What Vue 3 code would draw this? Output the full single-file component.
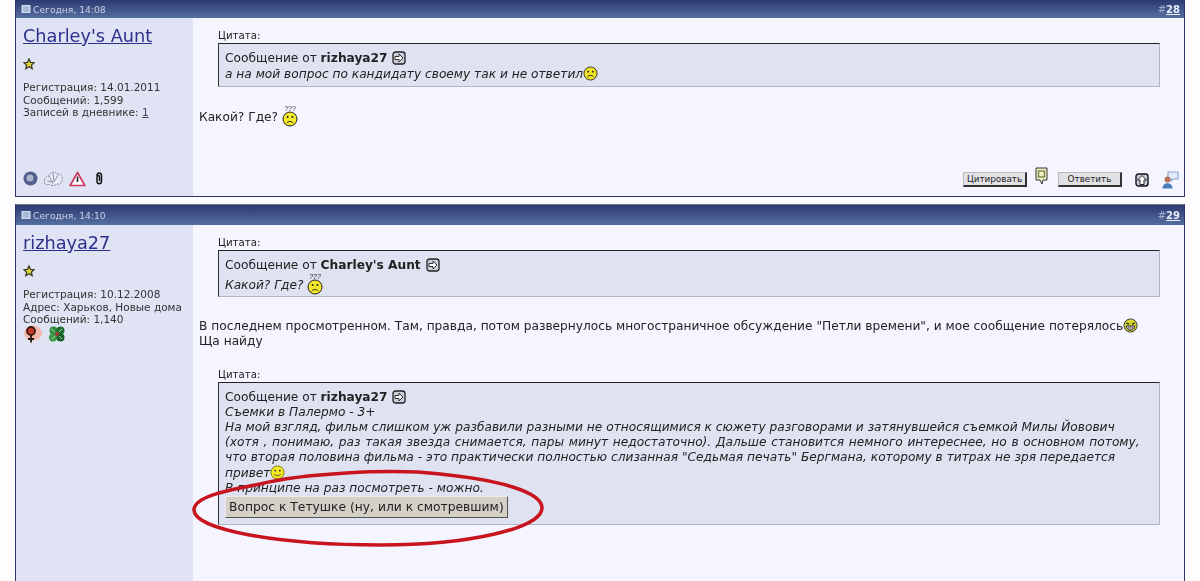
<template>
  <div class="page">
    <svg class="defs" width="0" height="0">
      <defs>
        <symbol id="puzzled" viewBox="0 0 16 22">
          <text x="8" y="6" font-size="7" text-anchor="middle" fill="#333" font-family="Liberation Sans, sans-serif">???</text>
          <circle cx="8" cy="14" r="7" fill="#f4e92c" stroke="#222" stroke-width="1" />
          <circle cx="5.600" cy="12" r="1" fill="#222" />
          <circle cx="10.400" cy="12" r="1" fill="#222" />
          <path d="M4.800 18c1.600-2 4.800-2 6.400 0" fill="none" stroke="#222" stroke-width="1" />
        </symbol>
        <symbol id="sad" viewBox="0 0 16 16">
          <circle cx="8" cy="8" r="7" fill="#f0e224" stroke="#333" stroke-width="1" />
          <circle cx="5.500" cy="6" r="1" fill="#222" />
          <circle cx="10.500" cy="6" r="1" fill="#222" />
          <path d="M4.800 11.500c1.600-2 4.800-2 6.400 0" fill="none" stroke="#222" stroke-width="1" />
        </symbol>
        <symbol id="smile" viewBox="0 0 16 16">
          <circle cx="8" cy="8" r="7" fill="#f6ea20" stroke="#7a7a20" stroke-width="1" />
          <circle cx="5.500" cy="6" r="1" fill="#333" />
          <circle cx="10.500" cy="6" r="1" fill="#333" />
          <path d="M4.500 9.500c1.600 2.600 5.400 2.600 7 0" fill="none" stroke="#333" stroke-width="1" />
        </symbol>
        <symbol id="laugh" viewBox="0 0 16 16">
          <circle cx="8" cy="8" r="7" fill="#d8d62c" stroke="#333" stroke-width="1" />
          <path d="M3.500 5.500l3 1M12.500 5.500l-3 1" stroke="#222" stroke-width="1.200" />
          <path d="M3.500 8.500h9c0 6-9 6-9 0z" fill="#fff" stroke="#222" stroke-width="1" />
          <path d="M3.800 10.500h8.400M6 8.500v4.500M8 8.500v5M10 8.500v4.500" stroke="#555" stroke-width="0.700" />
        </symbol>
        <symbol id="star" viewBox="0 0 12 12">
          <path d="M6 1l1.500 3.300 3.500.4-2.600 2.400.8 3.500L6 8.800l-3.200 1.800.8-3.500L1 4.700l3.500-.4z" fill="#e0d53a" stroke="#3e3e28" stroke-width="1.300" />
        </symbol>
        <symbol id="jump" viewBox="0 0 14 14">
          <rect x="1" y="1" width="12" height="12" rx="2.500" fill="#c9cddc" stroke="#222" stroke-width="1.300" />
          <path d="M3 5.500h4V3l4 4-4 4V8.500H3z" fill="#fff" stroke="#333" stroke-width="1" />
        </symbol>
        <symbol id="doc" viewBox="0 0 10 10">
          <rect x="0.500" y="1" width="9" height="8" fill="#cfdcf2" />
          <path d="M2 3h6M2 5h6M2 7h6" stroke="#7f95bd" stroke-width="1" />
        </symbol>
      </defs>
    </svg>

    <article v-for="post in posts" :key="post.id" class="post" :class="'post-' + post.id">
      <header class="post-head">
        <span class="post-date">
          <svg class="doc-icon" width="10" height="10"><use href="#doc" /></svg>
          {{ post.date }}
        </span>
        <span class="post-num">#<a>{{ post.id }}</a></span>
      </header>

      <div class="post-main">
        <aside class="side">
          <a class="username">{{ post.author }}</a>
          <svg class="rank" width="12" height="12"><use href="#star" /></svg>
          <div class="stats">
            <div v-for="line in post.stats" :key="line">{{ line }}</div>
            <div v-if="post.id === 28">Записей в дневнике: <a class="diary">1</a></div>
          </div>

          <div v-if="post.id === 29" class="awards">
            <svg width="19" height="18" viewBox="0 0 19 18">
              <ellipse cx="10" cy="8" rx="9" ry="7.500" fill="#f4b9ac" />
              <circle cx="8" cy="6" r="4" fill="#c43a2a" stroke="#3a1a10" stroke-width="1.800" />
              <path d="M8 10v7.500M5 14h6" stroke="#2a1410" stroke-width="1.800" />
            </svg>
            <svg width="18" height="18" viewBox="0 0 18 18">
              <circle cx="5.500" cy="5.500" r="4" fill="#2f8a3c" />
              <circle cx="12.500" cy="5.500" r="4" fill="#1f6e30" />
              <circle cx="5" cy="12.500" r="4" fill="#3c9a48" />
              <circle cx="12.500" cy="12.500" r="4" fill="#17602a" />
              <path d="M3 4l4 3M14 4l-3 3M4 14l3-3M14 14l-3-3" stroke="#a8d8a0" stroke-width="1" />
              <circle cx="9" cy="9" r="2" fill="#a83838" />
            </svg>
          </div>

          <div v-if="post.id === 28" class="status-icons">
            <svg width="15" height="15" viewBox="0 0 15 15">
              <circle cx="7.500" cy="7.500" r="7" fill="#525f8c" />
              <circle cx="7" cy="7" r="3.500" fill="#aeb4ca" />
            </svg>
            <svg width="21" height="17" viewBox="0 0 21 17">
              <path d="M2 14c-2-4 1-8 4-8 1-4 6-5 8-2 3-1 6 2 5 5 1 3-2 6-5 5-2 2-6 2-8 0-1 1-3 1-4 0z" fill="#e8ebf6" stroke="#7f86a0" stroke-width="1" stroke-dasharray="2 1" />
              <path d="M6 6l4 8M10 3l1 9M15 5l-4 7M4 11l6 1" stroke="#8f96ac" stroke-width="1" />
            </svg>
            <svg width="17" height="16" viewBox="0 0 17 16">
              <path d="M8.500 1.500L15.800 14.500H1.200z" fill="#fff" stroke="#cf3560" stroke-width="1.700" stroke-linejoin="round" />
              <path d="M8.500 5.500v5.500" stroke="#222" stroke-width="1.600" />
            </svg>
            <svg class="clip" width="8" height="13" viewBox="0 0 8 13">
              <path d="M2 4c0-4 4.500-4 4.500 0v5c0 3.500-4.500 3.500-4.500 0V5c0-2 2.500-2 2.500 0v4" fill="none" stroke="#111" stroke-width="1.500" />
            </svg>
          </div>
        </aside>

        <section class="body">
          <template v-if="post.id === 28">
            <div class="quote">
              <div class="quote-label">Цитата:</div>
              <div class="quote-box">
                <div>Сообщение от <b>rizhaya27</b> <svg class="jump" width="14" height="14"><use href="#jump" /></svg></div>
                <div class="it">а на мой вопрос по кандидату своему так и не ответил<svg class="emo" width="15" height="15"><use href="#sad" /></svg></div>
              </div>
            </div>
            <p class="msg first">Какой? Где? <svg class="emo tall" width="16" height="22"><use href="#puzzled" /></svg></p>
            <div class="actions">
              <button class="btn">Цитировать</button>
              <svg class="multi" width="13" height="19" viewBox="0 0 13 19">
                <path d="M1 1h11v12H8l-1 4-2-4H1z" fill="#f3f1c4" stroke="#333" stroke-width="1" />
                <path d="M3.500 4h6v6h-6z" fill="none" stroke="#7a8a50" stroke-width="1.500" />
              </svg>
              <button class="btn">Ответить</button>
              <svg class="up" width="14" height="14" viewBox="0 0 14 14">
                <rect x="1" y="1" width="12" height="12" rx="2.500" fill="#c9cddc" stroke="#111" stroke-width="1.400" />
                <path d="M7 2.500l4.500 4.500H9v4.500H5V7H2.500z" fill="#fff" stroke="#222" stroke-width="1" />
              </svg>
              <svg class="pm" width="17" height="19" viewBox="0 0 17 19">
                <path d="M6 2h10v7h-5l-2 2V9H6z" fill="#e2ebf8" stroke="#8fa8cc" stroke-width="1.200" />
                <circle cx="5.500" cy="9.500" r="3" fill="#b8705a" />
                <path d="M0.500 18.500c0-7 10-7 10 0z" fill="#4a7cc0" />
              </svg>
            </div>
          </template>

          <template v-else>
            <div class="quote">
              <div class="quote-label">Цитата:</div>
              <div class="quote-box">
                <div>Сообщение от <b>Charley's Aunt</b> <svg class="jump" width="14" height="14"><use href="#jump" /></svg></div>
                <div class="it puzzled-line">Какой? Где? <svg class="emo tall" width="16" height="22"><use href="#puzzled" /></svg></div>
              </div>
            </div>
            <p class="msg second">В последнем просмотренном. Там, правда, потом развернулось многостраничное обсуждение "Петли времени", и мое сообщение потерялось<svg class="emo" width="15" height="15"><use href="#laugh" /></svg><br />Ща найду</p>
            <div class="quote lower">
              <div class="quote-label">Цитата:</div>
              <div class="quote-box long">
                <div>Сообщение от <b>rizhaya27</b> <svg class="jump" width="14" height="14"><use href="#jump" /></svg></div>
                <div class="it">
                  Съемки в Палермо - 3+<br />
                  На мой взгляд, фильм слишком уж разбавили разными не относящимися к сюжету разговорами и затянувшейся съемкой Милы Йовович<br />
                  <span class="wide">(хотя , понимаю, раз такая звезда снимается, пары минут недостаточно). Дальше становится немного интереснее, но в основном потому,</span><br />
                  что вторая половина фильма - это практически полностью слизанная "Седьмая печать" Бергмана, которому в титрах не зря передается<br />
                  привет<svg class="emo" width="15" height="15"><use href="#smile" /></svg><br />
                  В принципе на раз посмотреть - можно.
                </div>
                <button class="spoiler">Вопрос к Тетушке (ну, или к смотревшим)</button>
              </div>
            </div>
          </template>
        </section>
      </div>
    </article>

    <!-- обводка поверх скриншота -->
    <svg class="scribble" width="360" height="80" viewBox="0 0 360 80">
      <path d="M70 14C110 4 200-2 250 4c60 6 102 18 102 34 0 20-72 37-162 37C90 75 4 60 4 40c0-14 36-20 66-26z" fill="none" stroke="#c8141e" stroke-width="3.500" stroke-linecap="round" />
    </svg>
  </div>
</template>

<script setup>
const posts = [
  {
    id: 28,
    date: 'Сегодня, 14:08',
    author: "Charley's Aunt",
    stats: ['Регистрация: 14.01.2011', 'Сообщений: 1,599']
  },
  {
    id: 29,
    date: 'Сегодня, 14:10',
    author: 'rizhaya27',
    stats: ['Регистрация: 10.12.2008', 'Адрес: Харьков, Новые дома', 'Сообщений: 1,140']
  }
]
</script>

<style>
html, body {
  background: #fdfdff;
  overflow: hidden;
}
</style>

<style scoped>
.page {
  position: relative;
  height: 581px;
  overflow: hidden;
  padding: 0 15px;
  box-sizing: border-box;
  font-family: "DejaVu Sans", Verdana, sans-serif;
  font-size: 12.2px;
  line-height: 15px;
  color: #222;
  filter: blur(0.3px);
}

.defs {
  position: absolute;
}

.post {
  border: 1px solid #2b3568;
  background: #f5f5ff;
}

.post-28 {
  height: 197px;
  box-sizing: border-box;
  border-top: 0;
  margin-bottom: 7px;
}

.post-29 {
  height: 420px;
  border-top-color: #777c90;
}

.post-head {
  display: flex;
  justify-content: space-between;
  align-items: center;
  padding: 0 4px 0 5px;
  background: linear-gradient(#2c3a72, #566ea0);
  color: #c8d0e4;
  font-size: 9.2px;
}

.post-28 .post-head {
  height: 18px;
}

.post-29 .post-head {
  height: 20px;
}

.post-date {
  display: flex;
  align-items: center;
  gap: 2px;
}

.post-num {
  font-size: 10px;
  color: #9fadc9;
}

.post-num a {
  color: #e8edf8;
  font-weight: bold;
  text-decoration: underline;
}

.post-main {
  display: flex;
  height: calc(100% - 18px);
}

.side {
  width: 177px;
  flex: none;
  display: flex;
  flex-direction: column;
  box-sizing: border-box;
  padding: 6px 7px 0;
  background: #dfe3f3;
  font-size: 10.5px;
  line-height: 12.5px;
  color: #333;
}

.username {
  font-size: 17.7px;
  line-height: 24px;
  color: #2d2f8c;
  text-decoration: underline;
}

.rank {
  margin-top: 10px;
}

.stats {
  margin-top: 11px;
}

.diary {
  color: #445;
  text-decoration: underline;
}

.awards {
  display: flex;
  gap: 6px;
  margin-top: -1px;
}

.status-icons {
  display: flex;
  align-items: center;
  gap: 5px;
  margin-top: auto;
  margin-bottom: 9px;
}

.status-icons .clip {
  margin-left: 4px;
}

.body {
  flex: 1;
  min-width: 0;
  display: flex;
  flex-direction: column;
  padding-top: 11px;
}

.quote {
  margin: 0 24px 0 25px;
}

.quote-label {
  font-size: 10.2px;
  line-height: 14px;
}

.quote-box {
  padding: 7px 6px 4px;
  border: 1px solid #b3b5c4;
  border-top-color: #222;
  border-left-color: #333;
  background: #dfe2f1;
}

.quote-box.long {
  height: 130px;
}

.it {
  font-style: italic;
}

.wide {
  word-spacing: 0.8px;
}

.puzzled-line {
  height: 19px;
  line-height: 22px;
}

.jump {
  vertical-align: -3px;
  margin-left: 1px;
}

.emo {
  vertical-align: -3px;
}

.emo.tall {
  vertical-align: -6px;
}

.msg {
  margin: 0;
  padding: 0 6px;
}

.msg.first {
  margin-top: 18px;
}

.msg.second {
  margin-top: 21px;
}

.lower {
  margin-top: 19px;
}

.spoiler {
  display: block;
  width: 283px;
  height: 22px;
  padding: 0 0 0 3px;
  background: #d4d0c8;
  border: 1px solid;
  border-color: #eeebe4 #55534e #55534e #eeebe4;
  font-family: inherit;
  font-size: 12.3px;
  color: #222;
  text-align: left;
  white-space: nowrap;
}

.actions {
  display: flex;
  align-items: center;
  justify-content: flex-end;
  margin-top: auto;
  margin-bottom: 7px;
  padding-right: 5px;
}

.btn {
  width: 64px;
  height: 15px;
  padding: 0;
  background: #e2e2e6;
  border-style: solid;
  border-width: 1px 2px 2px 1px;
  border-color: #bbb #333 #333 #bbb;
  font-family: inherit;
  font-size: 8.8px;
  line-height: 11px;
  color: #222;
}

.multi {
  margin: -6px 10px 0 8px;
}

.up {
  margin-left: 13px;
}

.pm {
  margin-left: 13px;
}

.scribble {
  position: absolute;
  left: 190px;
  top: 470px;
  overflow: visible;
}
</style>
